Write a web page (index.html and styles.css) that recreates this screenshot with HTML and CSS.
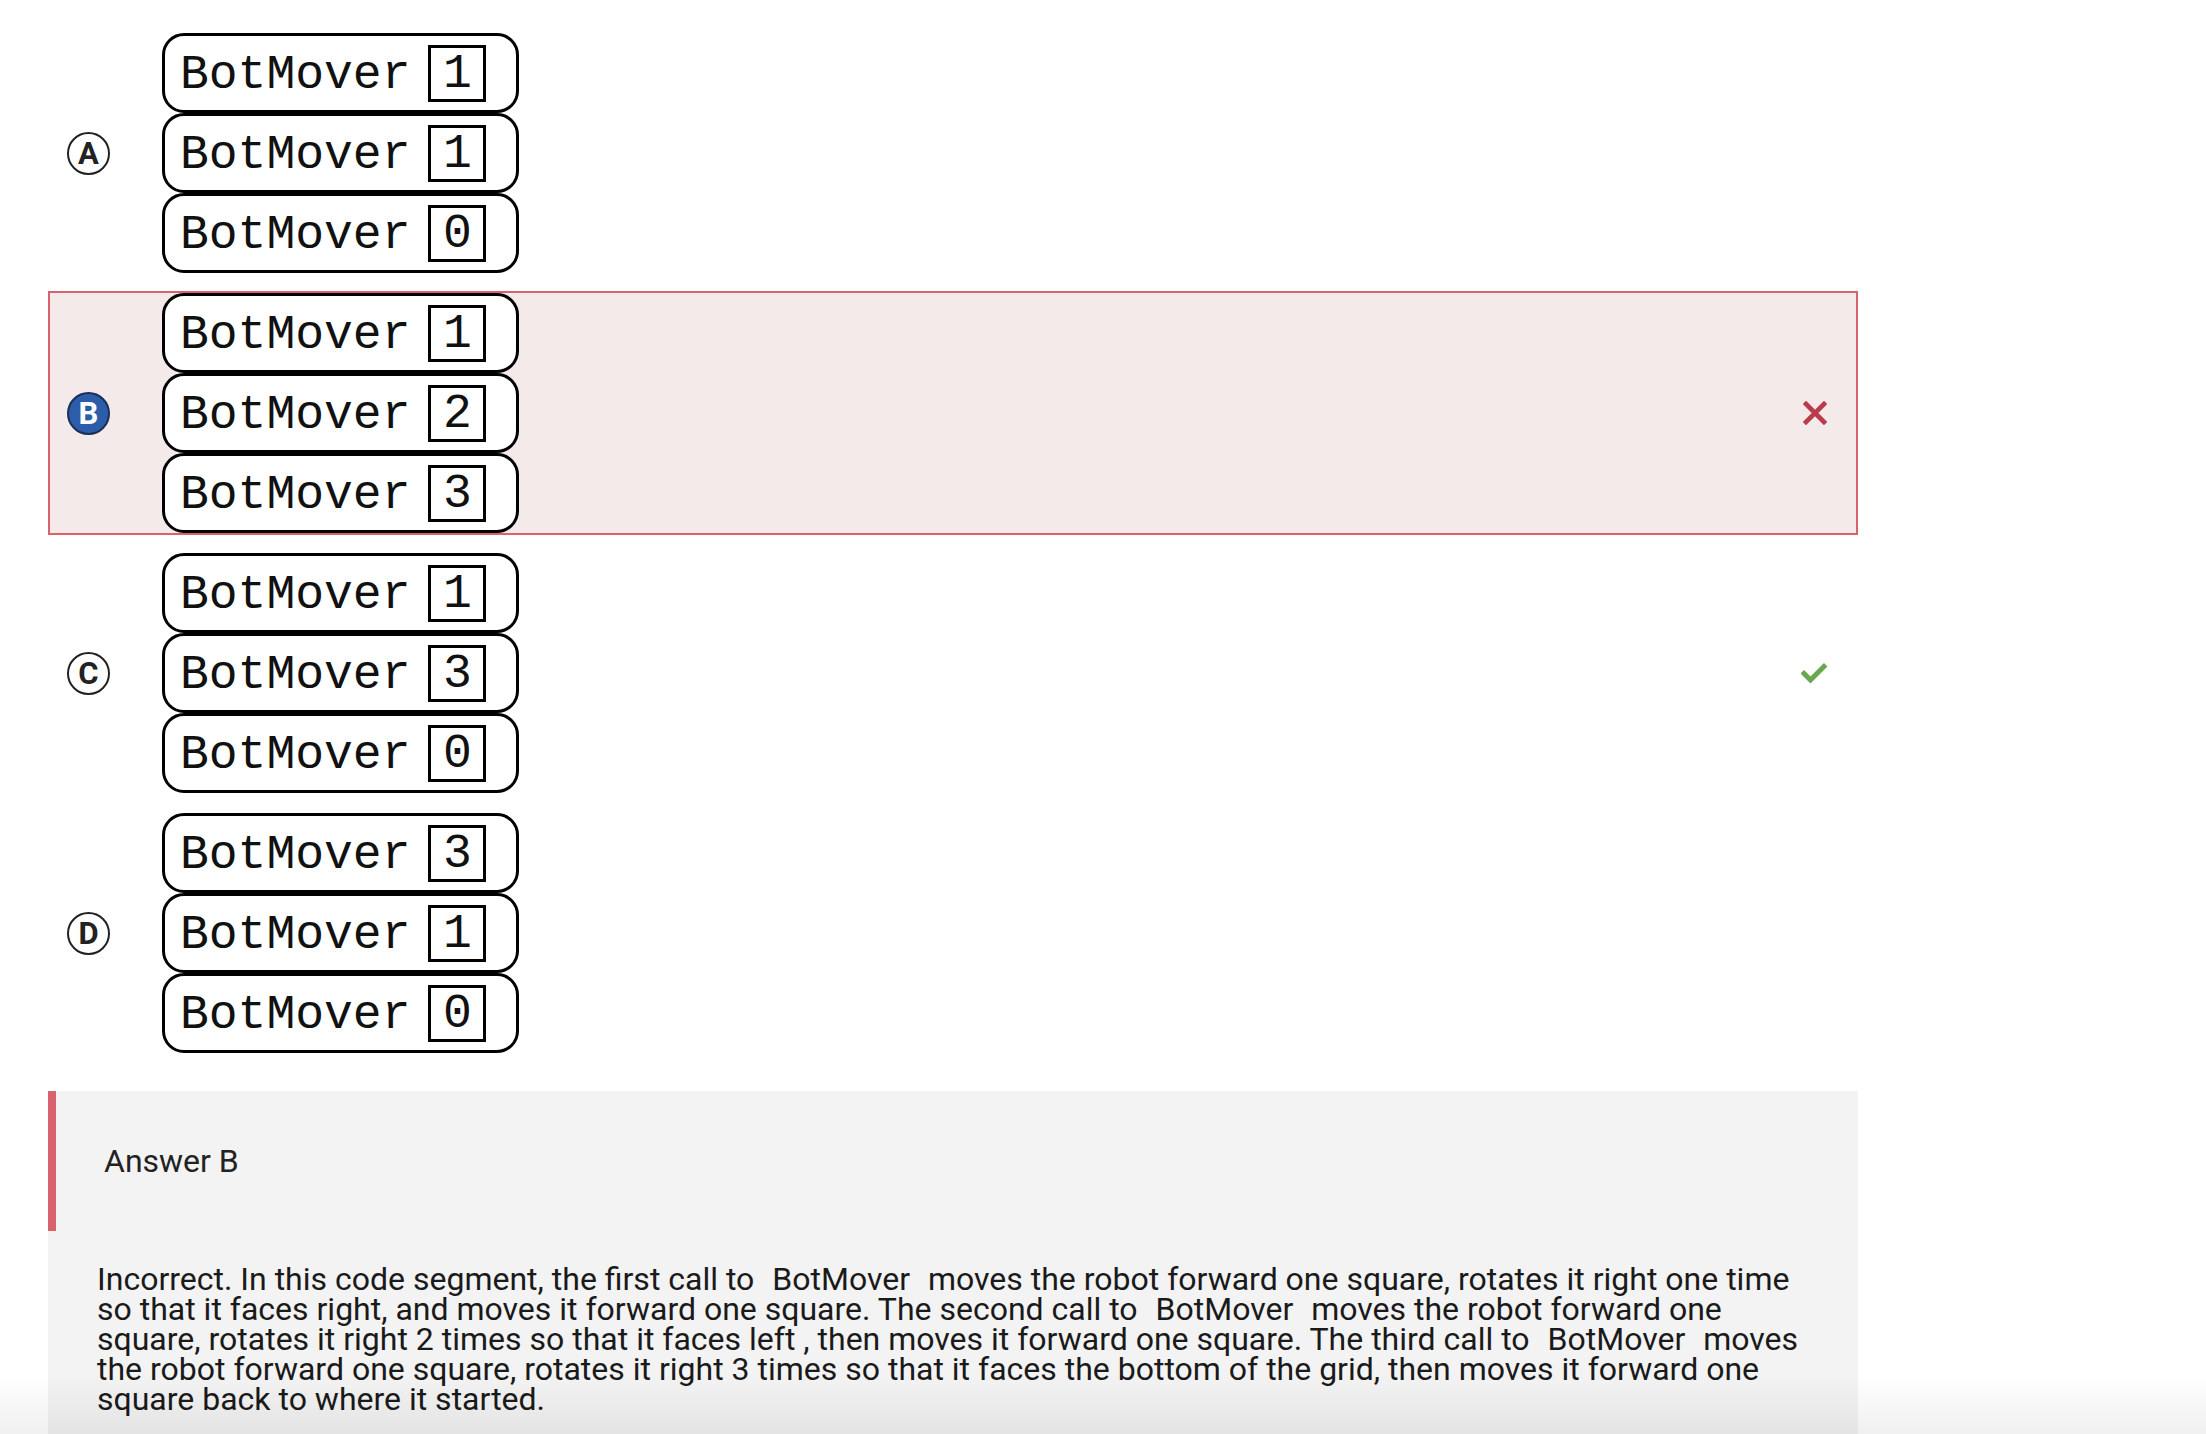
FILE: index.html
```html
<!DOCTYPE html>
<html>
<head>
<meta charset="utf-8">
<link rel="stylesheet" href="styles.css">
</head>
<body>
<div class="page">
  <div class="options">
    <div class="option">
      <div class="bubble">A</div>
      <div class="blocks">
        <div class="block"><span class="name">BotMover</span><span class="num">1</span></div>
        <div class="block"><span class="name">BotMover</span><span class="num">1</span></div>
        <div class="block"><span class="name">BotMover</span><span class="num">0</span></div>
      </div>
    </div>
    <div class="option wrong">
      <div class="bubble selected">B</div>
      <div class="blocks">
        <div class="block"><span class="name">BotMover</span><span class="num">1</span></div>
        <div class="block"><span class="name">BotMover</span><span class="num">2</span></div>
        <div class="block"><span class="name">BotMover</span><span class="num">3</span></div>
      </div>
      <div class="mark">
        <svg width="24" height="24" viewBox="0 0 24 24"><path d="M3 3 L21 21 M21 3 L3 21" stroke="#b83c4b" stroke-width="4.6" stroke-linecap="square" fill="none"/></svg>
      </div>
    </div>
    <div class="option">
      <div class="bubble">C</div>
      <div class="blocks">
        <div class="block"><span class="name">BotMover</span><span class="num">1</span></div>
        <div class="block"><span class="name">BotMover</span><span class="num">3</span></div>
        <div class="block"><span class="name">BotMover</span><span class="num">0</span></div>
      </div>
      <div class="mark">
        <svg width="26" height="22" viewBox="0 0 26 22"><path d="M3 11.5 L9.5 18 L23 4.5" stroke="#6aa84f" stroke-width="5" stroke-linecap="square" stroke-linejoin="miter" fill="none"/></svg>
      </div>
    </div>
    <div class="option">
      <div class="bubble">D</div>
      <div class="blocks">
        <div class="block"><span class="name">BotMover</span><span class="num">3</span></div>
        <div class="block"><span class="name">BotMover</span><span class="num">1</span></div>
        <div class="block"><span class="name">BotMover</span><span class="num">0</span></div>
      </div>
    </div>
  </div>
  <div class="answer">
    <div class="answer-head">Answer B</div>
    <div class="answer-body">Incorrect. In this code segment, the first call to <span class="code">BotMover</span> moves the robot forward one square, rotates it right one time so that it faces right, and moves it forward one square. The second call to <span class="code">BotMover</span> moves the robot forward one square, rotates it right 2 times so that it faces left , then moves it forward one square. The third call to <span class="code">BotMover</span> moves the robot forward one square, rotates it right 3 times so that it faces the bottom of the grid, then moves it forward one square back to where it started.</div>
  </div>
</div>
<div class="fade"></div>
</body>
</html>
```

FILE: styles.css
```css
html, body {
  margin: 0;
  padding: 0;
  background: #ffffff;
}
body {
  font-family: Roboto, "Liberation Sans", sans-serif;
  color: #1f1f1f;
  overflow: hidden;
  height: 1434px;
}
.page {
  padding: 31px 0 0 48px;
  width: 1810px;
}
.options {
  display: flex;
  flex-direction: column;
  gap: 16px;
}
.option {
  display: flex;
  align-items: center;
  height: 244px;
  box-sizing: border-box;
  border: 2px solid transparent;
}
.option.wrong {
  background: #f4eaea;
  border-color: #d8636f;
}
.bubble {
  width: 43px;
  height: 43px;
  box-sizing: border-box;
  margin-left: 17px;
  border: 2px solid #222;
  border-radius: 50%;
  display: flex;
  align-items: center;
  justify-content: center;
  font-family: Roboto, "Liberation Sans", sans-serif;
  font-weight: 700;
  font-size: 31px;
  line-height: 1;
  color: #222;
  flex: none;
}
.bubble.selected {
  background: #2b5daa;
  border-color: #1c2f55;
  color: #ffffff;
}
.blocks {
  display: flex;
  flex-direction: column;
  margin-left: 52px;
}
.block {
  width: 357px;
  height: 80px;
  box-sizing: border-box;
  border: 3px solid #000;
  border-radius: 22px;
  background: #fff;
  display: flex;
  align-items: center;
  padding-left: 15px;
  font-family: "Liberation Mono", "DejaVu Sans Mono", monospace;
  font-size: 48px;
  color: #111;
}
.name {
  display: block;
  line-height: 1;
  padding-top: 3px;
}
.num {
  display: flex;
  align-items: center;
  justify-content: center;
  width: 58px;
  height: 57px;
  box-sizing: border-box;
  border: 3px solid #000;
  margin-left: 18px;
  line-height: 1;
  padding-top: 2px;
}
.mark {
  margin-left: auto;
  margin-right: 29px;
  display: flex;
  align-items: center;
}
.answer {
  margin-top: 36px;
  background: #f3f3f3;
  min-height: 400px;
}
.answer-head {
  height: 140px;
  box-sizing: border-box;
  border-left: 8px solid #d8636f;
  padding-left: 48px;
  display: flex;
  align-items: center;
  font-size: 32px;
  color: #222;
}
.answer-body {
  padding: 33px 48px 0 49px;
  font-size: 32px;
  line-height: 30px;
  color: #1a1a1a;
}
.code {
  padding: 0 10px;
}
.fade {
  position: fixed;
  left: 0;
  right: 0;
  bottom: 0;
  height: 60px;
  background: linear-gradient(to bottom, rgba(0,0,0,0), rgba(0,0,0,0.06));
  pointer-events: none;
}
```
